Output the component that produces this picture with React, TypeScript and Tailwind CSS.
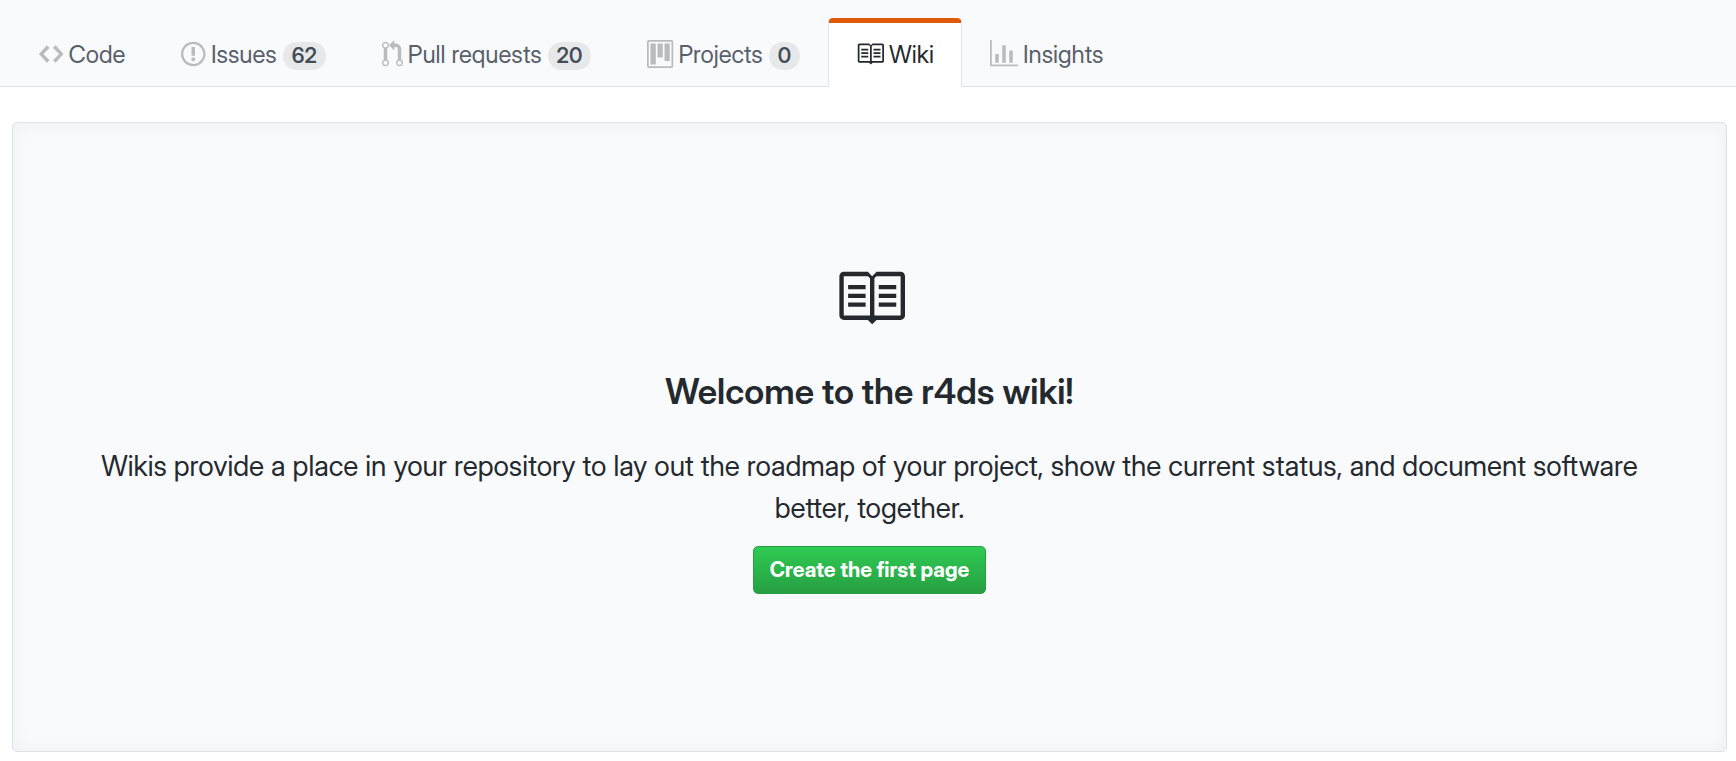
import type { ReactNode } from "react";

type IconProps = { path: string; width: number; className: string };

function Octicon({ path, width, className }: IconProps) {
  return (
    <svg aria-hidden="true" viewBox={`0 0 ${width} 16`} className={className} fill="currentColor">
      <path fillRule="evenodd" d={path} />
    </svg>
  );
}

const BOOK =
  "M3 5h4v1H3V5zm0 3h4V7H3v1zm0 2h4V9H3v1zm11-5h-4v1h4V5zm0 2h-4v1h4V7zm0 2h-4v1h4V9zm2-6v9c0 .55-.45 1-1 1H9.5l-1 1-1-1H2c-.55 0-1-.45-1-1V3c0-.55.45-1 1-1h5.5l1 1 1-1H15c.55 0 1 .45 1 1zm-8 .5L7.5 3H2v9h6V3.5zm7-.5H9.5l-.5.5V12h6V3z";
const CODE =
  "M9.5 3L8 4.5 11.5 8 8 11.5 9.5 13 14 8 9.5 3zm-5 0L0 8l4.5 5L6 11.5 2.5 8 6 4.5 4.5 3z";
const ISSUE =
  "M7 2.3c3.14 0 5.7 2.56 5.7 5.7s-2.56 5.7-5.7 5.7A5.71 5.71 0 0 1 1.3 8c0-3.14 2.56-5.7 5.7-5.7zM7 1C3.14 1 0 4.14 0 8s3.14 7 7 7 7-3.14 7-7-3.14-7-7-7zm1 3H6v5h2V4zm0 6H6v2h2v-2z";
const PULL =
  "M11 11.28V5c-.03-.78-.34-1.47-.94-2.06C9.46 2.35 8.78 2.03 8 2H7V0L4 3l3 3V4h1c.27.02.48.11.69.31.21.2.3.42.31.69v6.28A1.993 1.993 0 0 0 10 15a1.993 1.993 0 0 0 1-3.72zm-1 2.92c-.66 0-1.2-.55-1.2-1.2 0-.65.55-1.2 1.2-1.2.65 0 1.2.55 1.2 1.2 0 .65-.55 1.2-1.2 1.2zM4 3c0-1.11-.89-2-2-2a1.993 1.993 0 0 0-1 3.72v6.56A1.993 1.993 0 0 0 2 15a1.993 1.993 0 0 0 1-3.72V4.72c.59-.34 1-.98 1-1.72zm-.8 10c0 .66-.55 1.2-1.2 1.2-.65 0-1.2-.55-1.2-1.2 0-.65.55-1.2 1.2-1.2.65 0 1.2.55 1.2 1.2zM2 4.2C1.34 4.2.8 3.65.8 3c0-.65.55-1.2 1.2-1.2.65 0 1.2.55 1.2 1.2 0 .65-.55 1.2-1.2 1.2z";
const PROJECT =
  "M10 12h3V2h-3v10zm-4-2h3V2H6v8zm-4 4h3V2H2v12zm-1 1h13V1H1v14zM14 0H1a1 1 0 0 0-1 1v14a1 1 0 0 0 1 1h13a1 1 0 0 0 1-1V1a1 1 0 0 0-1-1z";
const GRAPH = "M16 14v1H0V0h1v14h15zM5 13H3V8h2v5zm4 0H7V3h2v10zm4 0h-2V6h2v7z";

type TabProps = { path: string; width: number; count?: number; active?: boolean; children: ReactNode };

function Tab({ path, width, count, active, children }: TabProps) {
  return (
    <a
      href="#"
      aria-current={active ? "page" : undefined}
      className={
        active
          ? "-mb-px flex items-start gap-[5px] rounded-t-[5px] border-x border-t-5 border-x-[#e1e4e8] border-t-[#e05a0c] bg-white px-[27px] pt-[17px] pb-[17px] text-[#24292e]"
          : "flex items-start gap-[5px] border-x border-t-5 border-transparent px-[27px] pt-[17px] pb-4 text-[#586069]"
      }
    >
      <Octicon path={path} width={width} className={active ? "h-7 w-auto" : "h-7 w-auto text-[#babbbc]"} />
      <span className="leading-[30px]">{children}</span>
      {count !== undefined && (
        <span className="mt-[2px] ml-px rounded-full bg-[#e7e8ea] px-[9px] text-[21px] leading-7 font-semibold text-[#444d56]">
          {count}
        </span>
      )}
    </a>
  );
}

export default function App() {
  return (
    <div className="min-h-screen bg-white font-['Inter_Display','Inter','Liberation_Sans',sans-serif] text-[#24292e]">
      <nav
        aria-label="Repository"
        className="flex items-end border-b border-[#dfe2e6] bg-[#f9fafc] px-[11px] pt-[18px] text-[24px]"
      >
        <Tab path={CODE} width={14}>Code</Tab>
        <Tab path={ISSUE} width={14} count={62}>Issues</Tab>
        <Tab path={PULL} width={12} count={20}>Pull requests</Tab>
        <Tab path={PROJECT} width={15} count={0}>Projects</Tab>
        <Tab path={BOOK} width={16} active>Wiki</Tab>
        <Tab path={GRAPH} width={16}>Insights</Tab>
      </nav>
      <main className="pt-[35px] pr-[9px] pb-[9px] pl-3">
        <section className="flex flex-col items-center rounded-[5px] border border-[#dfe2e6] bg-[#f9fafc] px-[88px] pt-[140px] pb-[157px] text-center shadow-[inset_0_0_18px_rgba(27,31,35,0.05)]">
          <Octicon path={BOOK} width={16} className="h-[70px] w-auto" />
          <h1 className="mt-[32px] text-[35px] leading-[52px] font-semibold">Welcome to the r4ds wiki!</h1>
          <p className="mt-[28px] text-[28px] leading-[42px]">
            Wikis provide a place in your repository to lay out the roadmap of your project, show the current status,
            and document software better, together.
          </p>
          <button
            type="button"
            className="mt-[17px] rounded-[5px] border border-[#279f43] bg-linear-to-b from-[#2fcb53] to-[#269f42] px-[16px] py-[5px] text-[21px] leading-[36px] font-bold text-white"
          >
            Create the first page
          </button>
        </section>
      </main>
    </div>
  );
}
